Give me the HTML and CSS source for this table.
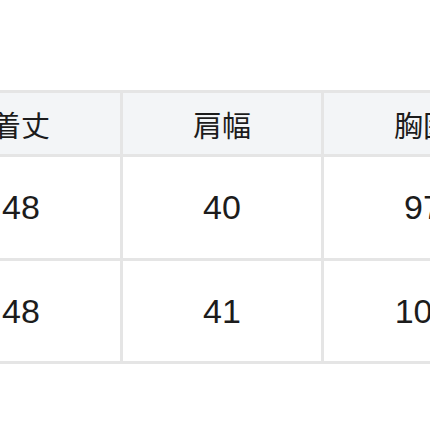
FILE: index.html
```html
<!DOCTYPE html>
<html lang="ja">
<head>
<meta charset="utf-8">
<link rel="stylesheet" href="styles.css">
</head>
<body>
<div class="viewport">
  <div class="size-table">
    <div class="cell head">着丈</div>
    <div class="cell head">肩幅</div>
    <div class="cell head">胸囲</div>
    <div class="cell">48</div>
    <div class="cell">40</div>
    <div class="cell">97</div>
    <div class="cell">48</div>
    <div class="cell">41</div>
    <div class="cell">100</div>
  </div>
</div>
</body>
</html>
```

FILE: styles.css
```css
html, body {
  margin: 0;
  padding: 0;
  background: #ffffff;
}
.viewport {
  width: 430px;
  height: 430px;
  overflow: hidden;
  padding-top: 90px;
  box-sizing: border-box;
}
.size-table {
  display: grid;
  grid-template-columns: repeat(3, 198px);
  grid-template-rows: 61px 101px 100px;
  gap: 3px;
  padding: 3px;
  width: max-content;
  margin-left: -81px;
  background: #e5e5e5;
}
.cell {
  display: flex;
  align-items: center;
  justify-content: center;
  background: #ffffff;
  color: #1c1c1c;
  font-family: "Liberation Sans", "Noto Sans CJK JP", sans-serif;
  font-size: 34px;
}
.cell.head {
  background: #f3f5f7;
  font-family: "Noto Sans CJK JP", sans-serif;
  font-size: 29px;
}
```
